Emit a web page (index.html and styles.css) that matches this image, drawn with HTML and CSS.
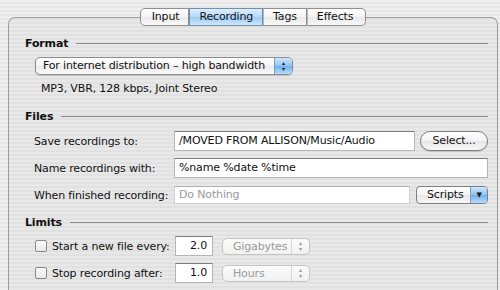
FILE: index.html
```html
<!DOCTYPE html>
<html lang="en">
<head>
    <meta charset="UTF-8">
    <title>Recording Preferences</title>
    <link rel="stylesheet" href="styles.css">
</head>
<body>
    <div class="panel">
        <div class="tabs">
            <span class="tab">Input</span>
            <span class="tab selected">Recording</span>
            <span class="tab">Tags</span>
            <span class="tab">Effects</span>
        </div>

        <div class="section-title">Format</div>
        <div class="format-row">
            <div class="popup">
                <span class="popup-text">For internet distribution – high bandwidth</span>
                <span class="stepper">&#9652;<br>&#9662;</span>
            </div>
        </div>
        <div class="format-info">MP3, VBR, 128 kbps, Joint Stereo</div>

        <div class="section-title files-title">Files</div>
        <div class="form-row">
            <span class="label">Save recordings to:</span>
            <span class="field save-field">/MOVED FROM ALLISON/Music/Audio</span>
            <span class="pill-btn">Select...</span>
        </div>
        <div class="form-row">
            <span class="label">Name recordings with:</span>
            <span class="field wide-field">%name %date %time</span>
        </div>
        <div class="form-row">
            <span class="label">When finished recording:</span>
            <span class="field disabled finish-field">Do Nothing</span>
            <span class="menu-btn">Scripts<span class="menu-arrow">&#9660;</span></span>
        </div>

        <div class="section-title limits-title">Limits</div>
        <div class="limit-row">
            <span class="check"></span>
            <span class="limit-label">Start a new file every:</span>
            <span class="field num-field">2.0</span>
            <span class="popup small-popup">
                <span class="popup-text">Gigabytes</span>
                <span class="stepper">&#9652;<br>&#9662;</span>
            </span>
        </div>
        <div class="limit-row">
            <span class="check"></span>
            <span class="limit-label">Stop recording after:</span>
            <span class="field num-field">1.0</span>
            <span class="popup small-popup">
                <span class="popup-text">Hours</span>
                <span class="stepper">&#9652;<br>&#9662;</span>
            </span>
        </div>
    </div>
</body>
</html>
```

FILE: styles.css
```css
body {
    margin: 0;
    height: 290px;
    overflow: hidden;
    font-family: 'DejaVu Sans', 'Liberation Sans', sans-serif;
    font-size: 11px;
    letter-spacing: -0.15px;
    color: #111;
    background: repeating-linear-gradient(to bottom, #eeeeee 0, #eeeeee 2px, #e7e7e7 2px, #e7e7e7 4px);
}
.panel {
    margin: 17px 2px 0 8px;
    height: 272px;
    border: 1px solid #9c9c9c;
    border-bottom: none;
    border-radius: 7px 7px 0 0;
    background: rgba(0, 0, 0, 0.025);
    padding: 0 9px 0 0;
}
.tabs {
    display: flex;
    justify-content: center;
    margin: -10px 0 0 9px;
}
.tab {
    height: 16px;
    line-height: 16px;
    padding: 0 9px;
    border: 1px solid #8e8e8e;
    border-left: 1px solid #b4b4b4;
    background: linear-gradient(to bottom, #ffffff, #f3f3f3 50%, #e9e9e9 51%, #f8f8f8);
    color: #111;
}
.tab:first-child {
    border-left: 1px solid #8e8e8e;
    border-radius: 5px 0 0 5px;
    padding-left: 11px;
}
.tab:last-child {
    border-radius: 0 5px 5px 0;
    padding-right: 12px;
}
.tab.selected {
    background: linear-gradient(to bottom, #dceefc, #b5d8f7 50%, #9ccbf3 51%, #cfe6fb);
    border-color: #6f8fae;
}
.section-title {
    display: flex;
    align-items: center;
    gap: 8px;
    height: 16px;
    margin: 9px 0 0 16px;
    font-weight: bold;
}
.section-title::after {
    content: "";
    flex: 1;
    border-top: 1px solid #8a8a8a;
}
.files-title {
    margin-top: 11px;
}
.limits-title {
    margin-top: 9px;
}
.format-row {
    display: flex;
    margin: 6px 0 0 26px;
}
.popup {
    display: flex;
    align-items: stretch;
    height: 16px;
    width: 256px;
    border: 1px solid #8c8c8c;
    border-radius: 5px;
    background: linear-gradient(to bottom, #ffffff, #f4f4f4 50%, #ebebeb 51%, #fafafa);
    box-shadow: 0 1px 1px rgba(0, 0, 0, 0.15);
}
.popup-text {
    flex: 1;
    line-height: 16px;
    padding-left: 7px;
    white-space: nowrap;
}
.stepper {
    width: 17px;
    border-left: 1px solid #7e9bbb;
    border-radius: 0 4px 4px 0;
    background: linear-gradient(to bottom, #cfe6fb, #8fc2f0 50%, #6fb0ec 51%, #b8dcfa);
    font-size: 6px;
    line-height: 6px;
    text-align: center;
    padding-top: 2px;
    color: #222;
}
.format-info {
    margin: 6px 0 0 32px;
    line-height: 16px;
}
.form-row {
    display: flex;
    align-items: center;
    gap: 5px;
    height: 20px;
    margin: 7px 0 0 25px;
}
.label {
    width: 135px;
    white-space: nowrap;
}
.field {
    box-sizing: border-box;
    height: 20px;
    line-height: 18px;
    padding: 0 4px;
    background: #ffffff;
    border: 1px solid #b5b5b5;
    border-top-color: #7c7c7c;
    white-space: nowrap;
}
.save-field {
    width: 241px;
}
.wide-field {
    flex: 1;
}
.finish-field {
    width: 236px;
    height: 18px;
    line-height: 16px;
}
.field.disabled {
    color: #9a9a9a;
    border-color: #d0d0d0;
    border-top-color: #b0b0b0;
}
.pill-btn {
    box-sizing: border-box;
    width: 68px;
    height: 20px;
    line-height: 18px;
    text-align: center;
    border: 1px solid #7e7e7e;
    border-radius: 10px;
    background: linear-gradient(to bottom, #ffffff, #f3f3f3 50%, #e6e6e6 51%, #f8f8f8);
    box-shadow: 0 1px 1px rgba(0, 0, 0, 0.15);
}
.menu-btn {
    box-sizing: border-box;
    display: flex;
    width: 72px;
    height: 18px;
    margin-left: 1px;
    line-height: 16px;
    border: 1px solid #7e7e7e;
    border-radius: 4px;
    background: linear-gradient(to bottom, #ffffff, #f3f3f3 50%, #e6e6e6 51%, #f8f8f8);
    padding-left: 10px;
    justify-content: space-between;
}
.menu-arrow {
    width: 16px;
    border-left: 1px solid #7e9bbb;
    border-radius: 0 3px 3px 0;
    background: linear-gradient(to bottom, #cfe6fb, #8fc2f0 50%, #6fb0ec 51%, #b8dcfa);
    font-size: 7px;
    text-align: center;
    color: #1a1a1a;
}
.limit-row {
    display: flex;
    align-items: center;
    height: 20px;
    margin: 7px 0 0 26px;
}
.limits-title + .limit-row {
    margin-top: 6px;
}
.check {
    box-sizing: border-box;
    width: 12px;
    height: 12px;
    border: 1px solid #888888;
    border-radius: 2px;
    background: linear-gradient(to bottom, #fafafa, #e8e8e8);
    margin-right: 5px;
}
.limit-label {
    width: 123px;
    white-space: nowrap;
}
.num-field {
    width: 38px;
    text-align: right;
    padding-right: 5px;
}
.small-popup {
    width: 86px;
    height: 15px;
    margin-left: 9px;
    border-color: #c4c4c4;
    background: linear-gradient(to bottom, #fbfbfb, #f1f1f1);
    box-shadow: none;
    color: #9a9a9a;
}
.small-popup .popup-text {
    line-height: 15px;
    padding-left: 10px;
}
.small-popup .stepper {
    background: none;
    border-left-color: #d6d6d6;
    color: #9a9a9a;
    padding-top: 1px;
}
```
